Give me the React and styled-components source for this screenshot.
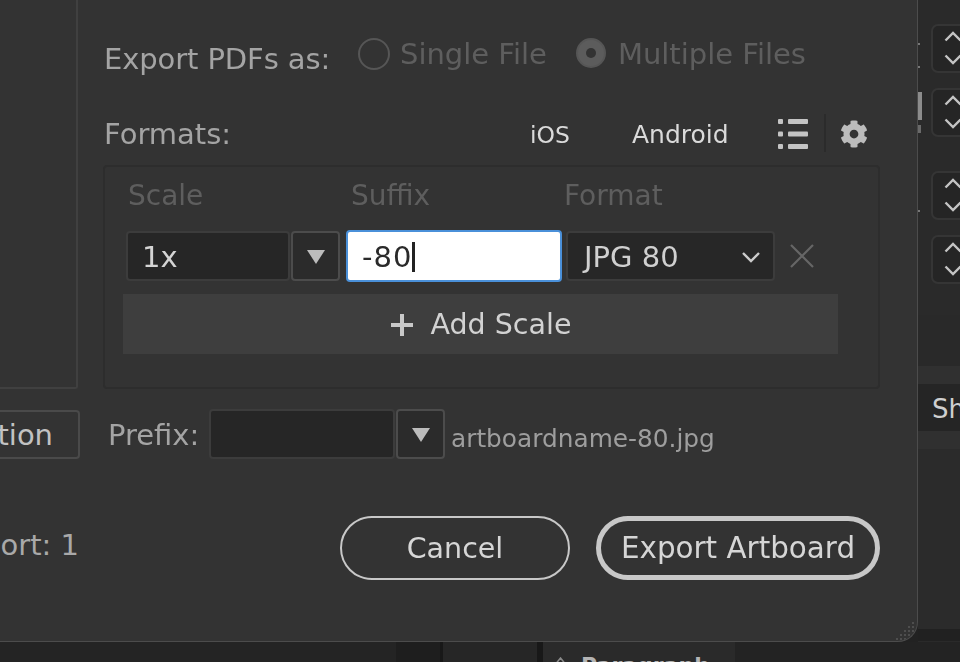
import React from "react";
import styled, { createGlobalStyle } from "styled-components";
import { FaCog } from "react-icons/fa";

const GlobalStyle = createGlobalStyle`
  html, body {
    margin: 0;
    padding: 0;
    background: #222222;
    overflow: hidden;
  }
  * {
    box-sizing: border-box;
  }
`;

const Page = styled.div`
  width: 960px;
  height: 662px;
  overflow: hidden;
  display: flex;
  flex-direction: column;
  font-family: "DejaVu Sans", "Liberation Sans", sans-serif;
  font-size: 29px;
  filter: blur(0.5px);
`;

const Top = styled.div`
  display: flex;
  height: 642px;
`;

const Dialog = styled.div`
  position: relative;
  z-index: 1;
  width: 918px;
  height: 642px;
  flex: none;
  display: flex;
  background: #333333;
  border-right: 1px solid #4c4c4c;
  border-bottom: 1px solid #4c4c4c;
  border-bottom-right-radius: 20px;
  overflow: hidden;
`;

const Left = styled.div`
  width: 103px;
  flex: none;
  display: flex;
  flex-direction: column;
  align-items: flex-end;
  overflow: hidden;
`;

const Preview = styled.div`
  width: 78px;
  height: 389px;
  flex: none;
  margin-right: 25px;
  border-right: 2px solid #404040;
  border-bottom: 2px solid #404040;
  border-bottom-right-radius: 3px;
`;

const LocationButton = styled.div`
  flex: none;
  width: 80px;
  height: 49px;
  margin: 21px 23px 0 0;
  display: flex;
  align-items: center;
  justify-content: flex-end;
  padding-right: 25px;
  overflow: hidden;
  white-space: nowrap;
  border: 2px solid #4a4a4a;
  border-left: none;
  border-radius: 0 4px 4px 0;
  color: #c2c2c2;
`;

const Count = styled.div`
  width: 103px;
  margin-top: 69px;
  padding-right: 24px;
  display: flex;
  justify-content: flex-end;
  white-space: nowrap;
  overflow: hidden;
  color: #a9a9a9;
  flex: none;
`;

const Main = styled.div`
  width: 777px;
  flex: none;
  padding-top: 38px;
  display: flex;
  flex-direction: column;
`;

const PdfRow = styled.div`
  height: 38px;
  display: flex;
  align-items: flex-start;
`;

const Label = styled.div`
  color: #a4a4a4;
  white-space: nowrap;
  line-height: 38px;
`;

const PdfLabel = styled(Label)`
  width: 255px;
  flex: none;
  padding: 2px 0 0 1px;
  letter-spacing: -0.1px;
`;

const Radio = styled.span`
  width: ${(p) => (p.$on ? 30 : 32)}px;
  height: ${(p) => (p.$on ? 30 : 32)}px;
  flex: none;
  border-radius: 50%;
  border: 2px solid #565656;
  background: ${(p) => (p.$on ? "#5c5c5c" : "transparent")};
  display: flex;
  align-items: center;
  justify-content: center;
  &::after {
    content: "";
    display: ${(p) => (p.$on ? "block" : "none")};
    width: 10px;
    height: 10px;
    border-radius: 50%;
    background: #333333;
  }
`;

const RadioLabel = styled.span`
  color: #5e5e5e;
  white-space: nowrap;
  margin: -3px ${(p) => p.$after}px 0 ${(p) => p.$before}px;
  line-height: 38px;
`;

const FormatsRow = styled.div`
  height: 38px;
  margin-top: 38px;
  display: flex;
  align-items: center;
`;

const FormatsLabel = styled(Label)`
  width: 427px;
  flex: none;
  padding: 2px 0 0 1px;
`;

const Preset = styled.span`
  color: #dadada;
  white-space: nowrap;
  padding-top: 3px;
  font-size: ${(p) => p.$size}px;
  width: ${(p) => p.$w}px;
  flex: none;
`;

const ToolDivider = styled.span`
  width: 2px;
  height: 38px;
  margin: 0 14px 0 16px;
  background: #2b2b2b;
`;

const ListGlyph = styled.svg`
  width: 30px;
  height: 30px;
  flex: none;
  margin-top: 2px;
`;

const GearSlot = styled.span`
  display: flex;
  margin-top: 2px;
`;

const FormatsBox = styled.div`
  width: 777px;
  height: 224px;
  margin-top: 13px;
  border: 2px solid #2d2d2d;
  border-radius: 4px;
  flex: none;
`;

const ColumnHeads = styled.div`
  display: flex;
  height: 36px;
  margin-top: 10px;
  padding-left: 23px;
  align-items: center;
`;

const ColumnHead = styled.span`
  color: #5e5e5e;
  font-size: 28px;
  width: ${(p) => p.$w}px;
  flex: none;
`;

const ScaleRow = styled.div`
  display: flex;
  align-items: center;
  height: 52px;
  margin-top: 17px;
  padding-left: 21px;
`;

const ComboInput = styled.div`
  width: ${(p) => p.$w}px;
  height: 50px;
  flex: none;
  display: flex;
  align-items: center;
  padding: 2px 0 0 14px;
  background: #262626;
  border: 2px solid #3c3c3c;
  border-radius: 4px;
  color: #d4d4d4;
`;

const ComboArrow = styled.div`
  width: 49px;
  height: 50px;
  flex: none;
  margin-left: 1px;
  display: flex;
  align-items: center;
  justify-content: center;
  background: #2b2b2b;
  border: 2px solid #4c4c4c;
  border-radius: 4px;
  &::after {
    content: "";
    margin-top: 2px;
    border-left: 9px solid transparent;
    border-right: 9px solid transparent;
    border-top: 14px solid #bcbcbc;
  }
`;

const SuffixInput = styled.div`
  width: 216px;
  height: 52px;
  flex: none;
  margin-left: 6px;
  display: flex;
  align-items: center;
  padding: 1px 0 0 14px;
  letter-spacing: 1px;
  background: #ffffff;
  border: 2px solid #4a90d9;
  border-radius: 4px;
  color: #2a2a2a;
`;

const Caret = styled.span`
  width: 3px;
  height: 30px;
  background: #222222;
`;

const FormatSelect = styled.div`
  width: 209px;
  height: 50px;
  flex: none;
  margin-left: 4px;
  display: flex;
  align-items: center;
  justify-content: space-between;
  padding: 1px 12px 0 16px;
  background: #272727;
  border: 2px solid #3c3c3c;
  border-radius: 4px;
  color: #d0d0d0;
`;

const RemoveIcon = styled.svg`
  width: 26px;
  height: 26px;
  margin-left: 14px;
  flex: none;
`;

const AddScale = styled.div`
  width: 715px;
  height: 60px;
  margin: 12px 0 0 18px;
  padding-top: 1px;
  display: flex;
  align-items: center;
  justify-content: center;
  gap: 17px;
  font-size: 28.5px;
  background: #3e3e3e;
  color: #d2d2d2;
`;

const PrefixRow = styled.div`
  display: flex;
  align-items: center;
  height: 50px;
  margin-top: 20px;
`;

const PrefixLabel = styled(Label)`
  width: 106px;
  flex: none;
  padding: 2px 0 0 5px;
`;

const FileName = styled.span`
  color: #9e9e9e;
  font-size: 24.8px;
  margin: 9px 0 0 6px;
  white-space: nowrap;
`;

const Footer = styled.div`
  display: flex;
  margin-top: 57px;
  padding-left: 237px;
  gap: 26px;
`;

const PillButton = styled.div`
  width: ${(p) => p.$w}px;
  height: 64px;
  flex: none;
  display: flex;
  align-items: center;
  justify-content: center;
  white-space: nowrap;
  border-radius: 32px;
  border: ${(p) => (p.$primary ? "5px" : "2px")} solid #c8c8c8;
  color: #d6d6d6;
  font-size: ${(p) => (p.$primary ? "29.4px" : "28.5px")};
`;

const Grip = styled.svg`
  position: absolute;
  right: 0;
  bottom: 0;
  width: 24px;
  height: 24px;
`;

const Side = styled.div`
  position: relative;
  flex: 1;
  height: 642px;
  display: flex;
  flex-direction: column;
  overflow: hidden;
  background: #2a2a2a;
`;

const Stepper = styled.div`
  width: 60px;
  height: 49px;
  margin: ${(p) => p.$top}px 0 0 13px;
  flex: none;
  background: #252525;
  border: 2px solid #353535;
  border-radius: 7px;
  padding: 4px 0 0 11px;
  display: flex;
  flex-direction: column;
  gap: 12px;
`;

const Chevron = styled.svg`
  width: 18px;
  height: 12px;
  flex: none;
  display: block;
`;

const Band = styled.div`
  height: ${(p) => p.$h}px;
  flex: none;
  margin-top: ${(p) => p.$top || 0}px;
  background: ${(p) => p.$bg};
  padding: 2px 0 0 14px;
  display: flex;
  align-items: center;
  color: #cfcfcf;
  font-size: 26px;
  overflow: hidden;
`;

const Peek = styled.div`
  position: absolute;
  left: ${(p) => p.$x}px;
  top: ${(p) => p.$y}px;
  width: ${(p) => p.$w}px;
  height: ${(p) => p.$h}px;
  background: ${(p) => p.$bg};
`;

const Bottom = styled.div`
  height: 20px;
  display: flex;
  overflow: hidden;
`;

const Section = styled.div`
  width: ${(p) => p.$w}px;
  flex: none;
  background: ${(p) => p.$bg};
`;

const ParagraphTab = styled.div`
  width: 192px;
  flex: none;
  display: flex;
  align-items: flex-start;
  padding: 12px 0 0 10px;
  gap: 13px;
  background: #2a2a2a;
  color: #b4b4b4;
  font-size: 22px;
  line-height: 24px;
  font-weight: bold;
  white-space: nowrap;
`;

const TabTriangle = styled.svg`
  width: 15px;
  height: 10px;
  margin-top: 3px;
  flex: none;
`;

const Up = () => (
  <Chevron viewBox="0 0 18 12">
    <polyline points="1.5,10.5 9,3 16.5,10.5" fill="none" stroke="#c4c4c4" strokeWidth="2.4" />
  </Chevron>
);

const Down = () => (
  <Chevron viewBox="0 0 18 12">
    <polyline points="1.5,1.5 9,9 16.5,1.5" fill="none" stroke="#c4c4c4" strokeWidth="2.4" />
  </Chevron>
);

const ListIcon = () => (
  <ListGlyph viewBox="0 0 30 30">
    {[0, 12.5, 25].map((y) => (
      <g key={y} fill="#c4c4c4">
        <rect x="0" y={y} width="5" height="5" rx="1" />
        <rect x="10" y={y} width="20" height="5" rx="1" />
      </g>
    ))}
  </ListGlyph>
);

const stepperTops = [24, 15, 34, 15];

const App = () => {
  return (
    <Page>
      <GlobalStyle />
      <Top>
        <Dialog>
          <Left>
            <Preview />
            <LocationButton>Location</LocationButton>
            <Count>Artboards to Export: 1</Count>
          </Left>
          <Main>
            <PdfRow>
              <PdfLabel>Export PDFs as:</PdfLabel>
              <Radio />
              <RadioLabel $before={10} $after={29}>Single File</RadioLabel>
              <Radio $on />
              <RadioLabel $before={12} $after={0}>Multiple Files</RadioLabel>
            </PdfRow>
            <FormatsRow>
              <FormatsLabel>Formats:</FormatsLabel>
              <Preset $w={102} $size={23.5}>iOS</Preset>
              <Preset $w={146} $size={25}>Android</Preset>
              <ListIcon />
              <ToolDivider />
              <GearSlot>
                <FaCog size={28} color="#bcbcbc" />
              </GearSlot>
            </FormatsRow>
            <FormatsBox>
              <ColumnHeads>
                <ColumnHead $w={223}>Scale</ColumnHead>
                <ColumnHead $w={213}>Suffix</ColumnHead>
                <ColumnHead $w={200}>Format</ColumnHead>
              </ColumnHeads>
              <ScaleRow>
                <ComboInput $w={164}>1x</ComboInput>
                <ComboArrow />
                <SuffixInput>
                  -80
                  <Caret />
                </SuffixInput>
                <FormatSelect>
                  JPG 80
                  <svg width="20" height="12" viewBox="0 0 20 12">
                    <polyline points="2,2 10,10 18,2" fill="none" stroke="#cccccc" strokeWidth="2.4" />
                  </svg>
                </FormatSelect>
                <RemoveIcon viewBox="0 0 26 26">
                  <path d="M2 2 L24 24 M24 2 L2 24" stroke="#666666" strokeWidth="2.2" fill="none" />
                </RemoveIcon>
              </ScaleRow>
              <AddScale>
                <svg width="24" height="24" viewBox="0 0 24 24">
                  <path d="M12 1 V23 M1 12 H23" stroke="#c8c8c8" strokeWidth="4" fill="none" />
                </svg>
                Add Scale
              </AddScale>
            </FormatsBox>
            <PrefixRow>
              <PrefixLabel>Prefix:</PrefixLabel>
              <ComboInput $w={186} />
              <ComboArrow />
              <FileName>artboardname-80.jpg</FileName>
            </PrefixRow>
            <Footer>
              <PillButton $w={230}>Cancel</PillButton>
              <PillButton $w={284} $primary>Export Artboard</PillButton>
            </Footer>
          </Main>
          <Grip viewBox="0 0 24 24">
            {[[19, 5], [15, 9], [19, 9], [11, 13], [15, 13], [19, 13], [7, 17], [11, 17], [15, 17], [3, 21], [7, 21], [11, 21]].map(([x, y]) => (
              <rect key={`${x}-${y}`} x={x} y={y} width="2" height="2" fill="#4e4e4e" />
            ))}
          </Grip>
        </Dialog>
        <Side>
          {stepperTops.map((top, i) => (
            <Stepper key={i} $top={top}>
              <Up />
              <Down />
            </Stepper>
          ))}
          <Band $h={16} $top={15} $bg="#2a2a2a" />
          <Band $h={51} $bg="#292929" />
          <Band $h={18} $bg="#303030" />
          <Band $h={47} $bg="#252525">Sh</Band>
          <Band $h={18} $bg="#303030" />
          <Band $h={180} $bg="#2b2b2b" />
          <Band $h={12} $bg="#212121" />
          <Peek $x={0} $y={92} $w={4} $h={28} $bg="#8c8c8c" />
          <Peek $x={0} $y={43} $w={2} $h={2} $bg="#777777" />
          <Peek $x={0} $y={66} $w={2} $h={2} $bg="#777777" />
          <Peek $x={0} $y={210} $w={2} $h={2} $bg="#777777" />
          <Peek $x={0} $y={125} $w={3} $h={8} $bg="#6a6a6a" />
        </Side>
      </Top>
      <Bottom>
        <Section $w={396} $bg="#242424" />
        <Section $w={44} $bg="#1e1e1e" />
        <Section $w={3} $bg="#181818" />
        <Section $w={94} $bg="#262626" />
        <Section $w={6} $bg="#181818" />
        <ParagraphTab>
          <TabTriangle viewBox="0 0 15 10">
            <polygon points="7.5,1 14,9 1,9" fill="none" stroke="#8a8a8a" strokeWidth="1.5" />
          </TabTriangle>
          Paragraph
        </ParagraphTab>
        <Section $w={225} $bg="#232323" />
      </Bottom>
    </Page>
  );
};

export default App;
